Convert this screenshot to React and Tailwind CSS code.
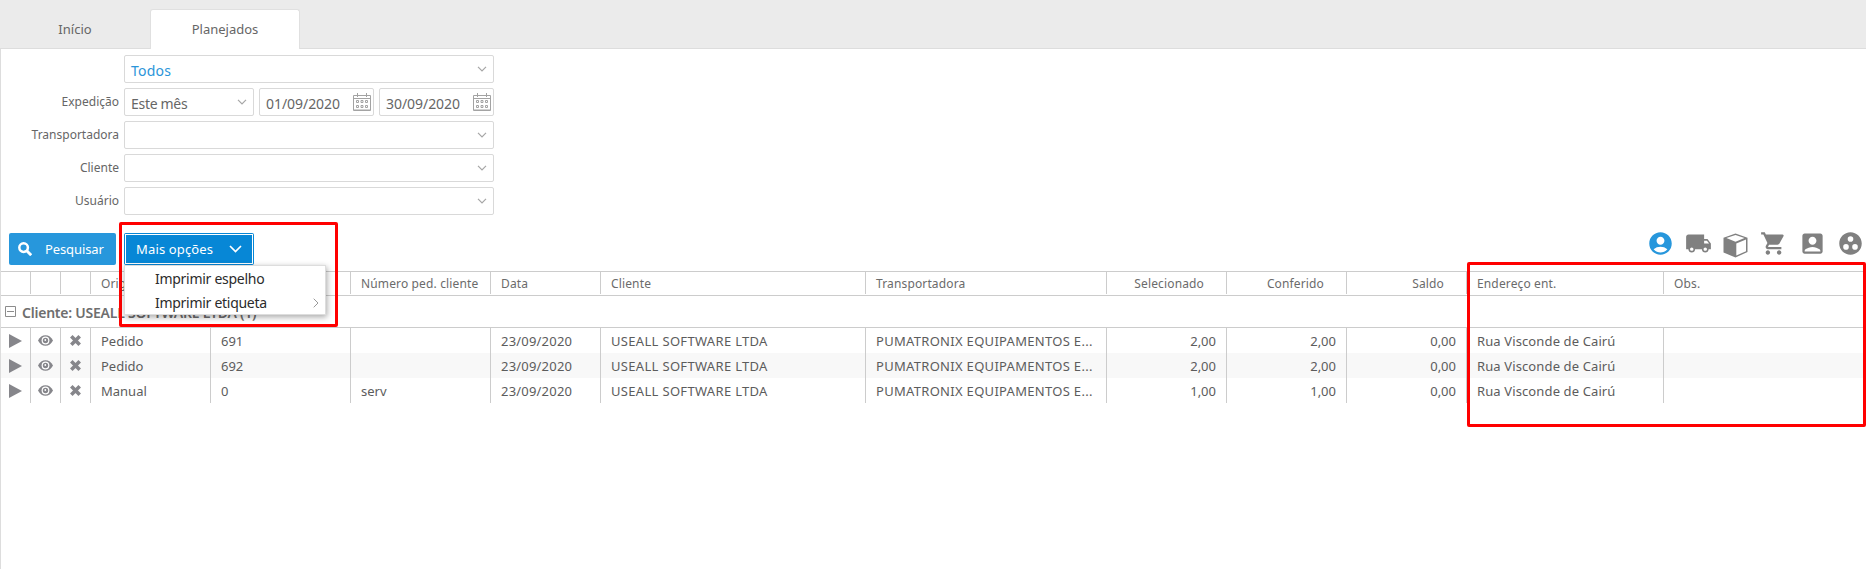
import { MdAccountCircle, MdLocalShipping, MdShoppingCart, MdAccountBox, MdGroupWork } from "react-icons/md";

function Chevron({ className = "" }) {
  return (
    <svg className={className} width="10" height="6" viewBox="0 0 10 6" fill="none" stroke="#a6a6a6" strokeWidth="1.2">
      <path d="M1 .8 5 4.8 9 .8" />
    </svg>
  );
}

function CalendarIcon() {
  return (
    <svg width="18" height="18" viewBox="0 0 18 18" fill="none" stroke="#a3a3a3">
      <path d="M.5 2.5h17v15H.5zM4.5 0v4M13.5 0v4M0 5.5h18" />
      <path d="M3.500 7.500h2v2h-2zM8 7.500h2v2H8zM12.500 7.500h2v2h-2zM3.500 12.500h2v2h-2zM8 12.500h2v2H8zM12.500 12.500h2v2h-2z" />
      <path d="M1 17h16" />
    </svg>
  );
}

function BoxIcon() {
  return (
    <svg className="mt-[4px] mr-px" width="25" height="25" viewBox="0 0 25 25">
      <path d="M12.500.500 24.500 4.800V19L12.500 24.500.500 19.500V4.800z" fill="#808080" />
      <path d="M12.500 2 21.500 5 12.500 8.800 3.400 5z" fill="#fff" />
      <path d="M13.300 10.600 23 6.600V18.200L13.300 22.600z" fill="#fff" />
    </svg>
  );
}

function Field({ label, children }) {
  return (
    <div className="flex h-[28px] items-center">
      <div className="w-[118px] pb-px text-right text-[12px] leading-[16px] text-[#666]">{label}</div>
      <div className="ml-[5px] flex gap-[5px]">{children}</div>
    </div>
  );
}

function Select({ value, wide = false, blue = false }) {
  return (
    <div className={`flex h-[28px] items-center justify-between rounded-[2px] border border-[#d9d9d9] pr-[6px] pl-[6px] ${wide ? "w-[370px]" : "w-[130px]"}`}>
      <span className={`pt-[3px] text-[14px] leading-[20px] ${blue ? "tracking-[0.2px] text-[#2b95d9]" : "tracking-[-0.3px] text-[#666]"}`}>{value}</span>
      <Chevron />
    </div>
  );
}

function DateInput({ value }) {
  return (
    <div className="flex h-[28px] w-[115px] items-center justify-between rounded-[2px] border border-[#d9d9d9] pr-[2px] pl-[6px]">
      <span className="pt-[3px] text-[14px] leading-[20px] tracking-[-0.05px] text-[#666]">{value}</span>
      <CalendarIcon />
    </div>
  );
}

const COLS = "grid grid-cols-[30px_30px_30px_120px_140px_140px_110px_265px_241px_120px_120px_120px_197px_1fr]";
const HEADERS = ["", "", "", "Origem", "Número", "Número ped. cliente", "Data", "Cliente", "Transportadora", "Selecionado", "Conferido", "Saldo", "Endereço ent.", "Obs."];
const ROWS = [
  ["Pedido", "691", "", "2,00", "2,00"],
  ["Pedido", "692", "", "2,00", "2,00"],
  ["Manual", "0", "serv", "1,00", "1,00"],
];

function Cell({ children, right = false, last = false, header = false, className = "" }) {
  return (
    <div className={`overflow-hidden whitespace-nowrap pl-[10px] ${last ? "" : "border-r border-[#ccc]"} ${right ? (header ? "pr-[22px] text-right" : "pr-[10px] text-right") : ""} ${className}`}>
      {children}
    </div>
  );
}

function IconCell({ children }) {
  return <div className="flex items-center justify-center border-r border-[#ccc]">{children}</div>;
}

function Row({ row, striped }) {
  const [origin, number, order, selected, checked] = row;
  return (
    <div className={`${COLS} h-[25px] text-[13px] leading-[26px] text-[#5c5c5c] ${striped ? "bg-[#f8f8f8]" : ""}`}>
      <IconCell>
        <svg width="13" height="14" viewBox="0 0 13 14" fill="#86868b"><path d="M0 0 13 7 0 14z" /></svg>
      </IconCell>
      <IconCell>
        <svg width="15" height="11" viewBox="0 0 15 11">
          <path d="M0 5.500C1.800 2 4.400.300 7.500.300S13.200 2 15 5.500C13.200 9 10.600 10.700 7.500 10.700S1.800 9 0 5.500z" fill="#86868b" />
          <circle cx="7.500" cy="5.500" r="3.900" fill="#fff" />
          <circle cx="7.500" cy="5.500" r="2.700" fill="#86868b" />
          <circle cx="7.300" cy="5" r="0.900" fill="#fff" />
        </svg>
      </IconCell>
      <IconCell>
        <svg width="11" height="11" viewBox="0 0 11 11" stroke="#86868b" strokeWidth="3.600"><path d="m1.300 1.300 8.400 8.400M9.700 1.300 1.300 9.700" /></svg>
      </IconCell>
      <Cell>{origin}</Cell>
      <Cell>{number}</Cell>
      <Cell>{order}</Cell>
      <Cell className="tracking-[0.2px]">23/09/2020</Cell>
      <Cell className="tracking-[0.32px]">USEALL SOFTWARE LTDA</Cell>
      <Cell className="tracking-[0.3px]">PUMATRONIX EQUIPAMENTOS E...</Cell>
      <Cell right>{selected}</Cell>
      <Cell right>{checked}</Cell>
      <Cell right>0,00</Cell>
      <Cell className="tracking-[0.12px]">Rua Visconde de Cairú</Cell>
      <Cell last />
    </div>
  );
}

export default function App() {
  return (
    <div className="relative flex h-[569px] w-[1866px] flex-col overflow-hidden bg-white font-['Noto_Sans','Open_Sans',sans-serif]">
      <div className="flex h-[49px] shrink-0 items-end bg-[#ebebeb] text-[13px] text-[#666]">
        <div className="flex h-[39px] w-[150px] items-center justify-center border-b border-[#ddd] pt-px">Início</div>
        <div className="flex h-[40px] w-[150px] items-center justify-center rounded-t-[3px] border border-b-0 border-[#e0e0e0] bg-white">Planejados</div>
        <div className="h-[39px] flex-1 border-b border-[#ddd]" />
      </div>

      <div className="flex flex-1 flex-col border-l border-[#ddd] pt-[6px]">
        <div className="flex flex-col gap-[5px]">
          <Field label=""><Select value="Todos" wide blue /></Field>
          <Field label="Expedição">
            <Select value="Este mês" />
            <DateInput value="01/09/2020" />
            <DateInput value="30/09/2020" />
          </Field>
          <Field label="Transportadora"><Select wide /></Field>
          <Field label="Cliente"><Select wide /></Field>
          <Field label="Usuário"><Select wide /></Field>
        </div>

        <div className="mt-[18px] flex h-[32px] gap-[8px] pl-[8px] text-[13px] text-white">
          <div className="flex w-[107px] items-center rounded-[2px] bg-[#2797dc] pl-[9px]">
            <svg width="14" height="14" viewBox="0 0 14 14" fill="none" stroke="#fff"><circle cx="5.600" cy="5.600" r="4.300" strokeWidth="2.500" /><path d="m9 9 4.200 4.200" strokeWidth="2.900" /></svg>
            <span className="ml-[13px] pt-px tracking-[-0.1px]">Pesquisar</span>
          </div>
          <div className="flex w-[130px] rounded-[2px] bg-[#0787d6] p-px">
            <div className="flex flex-1 items-center justify-between border border-white pr-[10px] pl-[10px]">
              <span className="pt-px tracking-[0.15px]">Mais opções</span>
              <svg width="13" height="8" viewBox="0 0 13 8" fill="none" stroke="#fff" strokeWidth="1.700"><path d="m1 1 5.500 5.500L12 1" /></svg>
            </div>
          </div>
        </div>

        <div className="mt-[6px] mr-[2px]">
          <div className={`${COLS} h-[25px] border-t border-b border-[#ccc] pb-px text-[12px] leading-[23px] tracking-[0.14px] text-[#6b6b6b]`}>
            {HEADERS.map((h, i) => (
              <Cell key={i} header right={i >= 9 && i <= 11} last={i === 13}>{h}</Cell>
            ))}
          </div>
          <div className="flex h-[32px] items-center border-b border-[#ccc] pl-[4px] text-[14px] font-semibold tracking-[-0.23px] text-[#6e6e6e]">
            <svg width="11" height="11" viewBox="0 0 11 11" fill="none" stroke="#8c8c8c"><path d="M.5.5h10v10H.5zM2 5.500h7" /></svg>
            <span className="ml-[6px] pt-px">Cliente: USEALL SOFTWARE LTDA (1)</span>
          </div>
          {ROWS.map((row, i) => <Row key={i} row={row} striped={i === 1} />)}
        </div>
      </div>

      <div className="absolute top-[229px] right-[2px] flex items-center gap-[11px] text-[#808080]">
        <MdAccountCircle size={27} color="#2797dc" />
        <MdLocalShipping size={27} />
        <BoxIcon />
        <MdShoppingCart size={27} className="mr-px" />
        <MdAccountBox size={27} />
        <MdGroupWork size={27} />
      </div>

      <div className="absolute top-[222px] left-[119px] h-[105px] w-[219px] rounded-[2px] border-3 border-[#f00]" />
      <div className="absolute top-[262px] left-[1467px] h-[165px] w-[399px] rounded-[2px] border-3 border-[#f00]" />

      <div className="absolute top-[265px] left-[124px] flex h-[50px] w-[202px] flex-col border border-[#ddd] bg-white pt-px text-[14px] leading-[24px] tracking-[-0.28px] text-[#2b2b2b] shadow-[1px_2px_6px_rgba(0,0,0,0.35)]">
        <div className="pl-[30px]">Imprimir espelho</div>
        <div className="flex items-center justify-between pr-[6px] pl-[30px]">
          Imprimir etiqueta
          <svg width="6" height="10" viewBox="0 0 6 10" fill="none" stroke="#999"><path d="m.7.700 4.300 4.300L.7 9.300" /></svg>
        </div>
      </div>
    </div>
  );
}
